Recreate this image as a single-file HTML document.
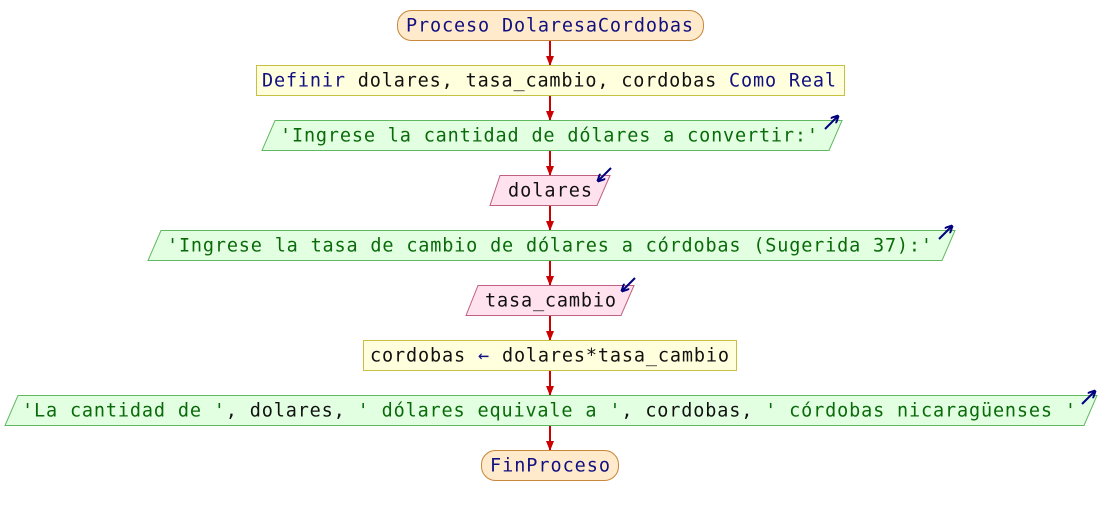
<!DOCTYPE html>
<html><head><meta charset="utf-8"><style>
html,body{margin:0;padding:0;background:#fff;width:1100px;height:515px;overflow:hidden}
text{font-family:"DejaVu Sans Mono","Liberation Mono",monospace;font-size:18.5px}
.k{fill:#101080}.s{fill:#0a6a0a}.v{fill:#111}
</style></head><body>
<svg width="1100" height="515" viewBox="0 0 1100 515" xmlns="http://www.w3.org/2000/svg">
<defs>
<marker id="r" markerWidth="10" markerHeight="8" refX="9" refY="4" orient="auto" markerUnits="userSpaceOnUse"><path d="M0,0 L10,4 L0,8z" fill="#cc0000"/></marker>
<marker id="b" markerWidth="8" markerHeight="8" refX="7" refY="4" orient="auto" markerUnits="userSpaceOnUse"><path d="M0,0 L8,4 L0,8" fill="none" stroke="#000080" stroke-width="2"/></marker>
</defs>
<g stroke="#cc0000" stroke-width="2" marker-end="url(#r)">
<line x1="550" y1="40" x2="550" y2="65"/>
<line x1="550" y1="95" x2="550" y2="120"/>
<line x1="550" y1="150" x2="550" y2="175"/>
<line x1="550" y1="205" x2="550" y2="230"/>
<line x1="550" y1="260" x2="550" y2="285"/>
<line x1="550" y1="315" x2="550" y2="340"/>
<line x1="550" y1="370" x2="550" y2="395"/>
<line x1="550" y1="425" x2="550" y2="450"/>
</g>
<rect x="397.5" y="10.5" width="306" height="30" rx="14" fill="#ffeacc" stroke="#c8873a"/>
<text x="406" y="31.5" textLength="287" lengthAdjust="spacing" class="k">Proceso DolaresaCordobas</text>
<rect x="256.5" y="65.5" width="588" height="30" fill="#ffffdd" stroke="#c8c040"/>
<text x="262" y="86.5" textLength="574" lengthAdjust="spacing"><tspan class="k">Definir </tspan><tspan class="v">dolares, tasa_cambio, cordobas </tspan><tspan class="k">Como Real</tspan></text>
<polygon points="275,120.5 842,120.5 829,150.5 262,150.5" fill="#e2ffe2" stroke="#60b860"/>
<text x="280" y="141.5" textLength="538" lengthAdjust="spacing" class="s">'Ingrese la cantidad de dólares a convertir:'</text>
<line x1="825" y1="129" x2="838" y2="116" stroke="#000080" stroke-width="2" marker-end="url(#b)"/>
<polygon points="500,175.5 610,175.5 597,205.5 490,205.5" fill="#ffe2ee" stroke="#c06080"/>
<text x="508" y="196.5" textLength="84" lengthAdjust="spacing" class="v">dolares</text>
<line x1="611" y1="168" x2="598" y2="181" stroke="#000080" stroke-width="2" marker-end="url(#b)"/>
<polygon points="161,230.5 955,230.5 942,260.5 148,260.5" fill="#e2ffe2" stroke="#60b860"/>
<text x="167" y="251.5" textLength="765" lengthAdjust="spacing" class="s">'Ingrese la tasa de cambio de dólares a córdobas (Sugerida 37):'</text>
<line x1="939" y1="239" x2="952" y2="226" stroke="#000080" stroke-width="2" marker-end="url(#b)"/>
<polygon points="478,285.5 634,285.5 621,315.5 466,315.5" fill="#ffe2ee" stroke="#c06080"/>
<text x="485" y="306.5" textLength="131" lengthAdjust="spacing" class="v">tasa_cambio</text>
<line x1="635" y1="278" x2="622" y2="291" stroke="#000080" stroke-width="2" marker-end="url(#b)"/>
<rect x="363.5" y="340.5" width="373" height="30" fill="#ffffdd" stroke="#c8c040"/>
<text x="370" y="361.5" textLength="359" lengthAdjust="spacing" class="v">cordobas <tspan class="k">←</tspan> dolares*tasa_cambio</text>
<polygon points="18,395.5 1097,395.5 1084,425.5 5,425.5" fill="#e2ffe2" stroke="#60b860"/>
<text x="22" y="416.5" textLength="1054" lengthAdjust="spacing"><tspan class="s">'La cantidad de '</tspan><tspan class="v">, dolares, </tspan><tspan class="s">' dólares equivale a '</tspan><tspan class="v">, cordobas, </tspan><tspan class="s">' córdobas nicaragüenses '</tspan></text>
<line x1="1082" y1="404" x2="1095" y2="391" stroke="#000080" stroke-width="2" marker-end="url(#b)"/>
<rect x="481.5" y="450.5" width="137" height="30" rx="14" fill="#ffeacc" stroke="#c8873a"/>
<text x="490" y="471.5" textLength="120" lengthAdjust="spacing" class="k">FinProceso</text>
</svg>
</body></html>
